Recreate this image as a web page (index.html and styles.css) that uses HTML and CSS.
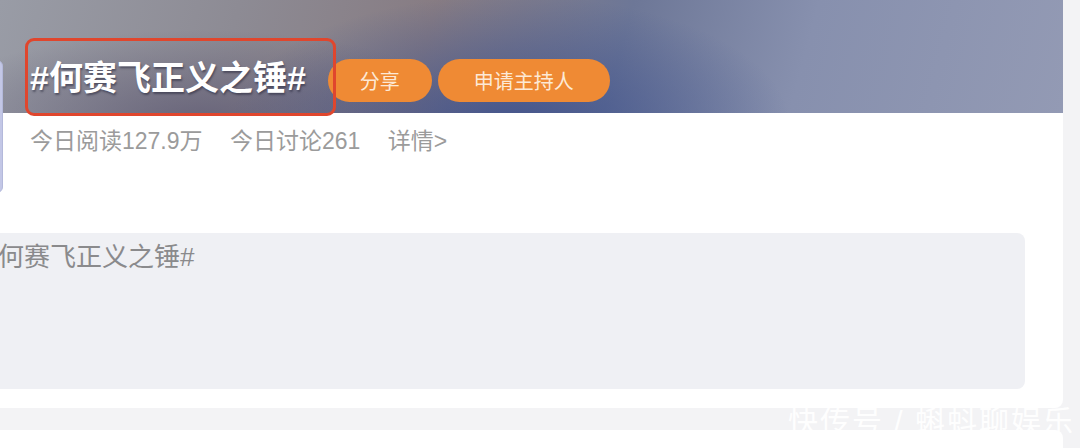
FILE: index.html
```html
<!DOCTYPE html>
<html lang="zh-CN">
<head>
  <meta charset="UTF-8">
  <title>#何赛飞正义之锤#</title>
  <link rel="stylesheet" href="styles.css">
</head>
<body>

<div class="card">
  <div class="head">
    <div class="avatar"></div>
    <div class="info">
      <div class="title-row">
        <h1 class="title">#何赛飞正义之锤#</h1>
        <button class="pill share">分享</button>
        <button class="pill host">申请主持人</button>
      </div>
      <div class="stats">
        <span>今日阅读127.9万</span>
        <span>今日讨论261</span>
        <span>详情&gt;</span>
      </div>
    </div>
  </div>
  <div class="compose">何赛飞正义之锤#</div>
</div>

<div class="card next"></div>

<div class="watermark">快传号 / 蝌蚪聊娱乐</div>

</body>
</html>
```

FILE: styles.css
```css
* {
  box-sizing: border-box;
}

body {
  margin: 0;
  font-family: "Liberation Sans", "Noto Sans CJK SC", sans-serif;
  background-color: #f3f3f5;
  height: 448px;
  overflow: hidden;
  position: relative;
}

.card {
  width: 1063px;
  height: 408px;
  padding-top: 59px;
  border-radius: 0 0 8px 0;
  background:
    radial-gradient(ellipse 280px 130px at 510px 125px, rgba(58, 78, 140, 0.85), rgba(58, 78, 140, 0) 100%) 0 0 / 100% 113px no-repeat,
    radial-gradient(ellipse 280px 90px at 200px 120px, rgba(85, 80, 108, 0.65), rgba(85, 80, 108, 0) 100%) 0 0 / 100% 113px no-repeat,
    linear-gradient(105deg, #999ca6 0%, #8d8b94 22%, #877c83 40%, #6d7797 58%, #8790ae 75%, #939ab4 100%) 0 0 / 100% 113px no-repeat,
    #fff;
}

.card.next {
  height: 40px;
  margin-top: 22px;
  padding: 0;
  background: #fff;
  border-radius: 0 8px 0 0;
}

.head {
  display: flex;
  align-items: flex-start;
  gap: 27px;
}

.avatar {
  width: 133px;
  height: 133px;
  margin-left: -130px;
  margin-top: 1px;
  border-radius: 6px;
  background-color: #c3c7e6;
  border: 1px solid #b4b9db;
}

.title-row {
  display: flex;
  align-items: center;
  height: 42px;
}

.title {
  position: relative;
  top: -2px;
  margin: 0 22px 0 0;
  font-size: 34px;
  line-height: 42px;
  font-weight: bold;
  color: #fff;
  text-shadow: 1px 2px 2px rgba(40, 40, 60, 0.55);
}

/* annotation box drawn over the title */
.title::after {
  content: "";
  position: absolute;
  top: -19px;
  bottom: -17px;
  left: -5px;
  right: -30px;
  border: 3px solid #e0462d;
  border-radius: 9px;
}

.pill {
  height: 43px;
  border: none;
  border-radius: 22px;
  background-color: #ef8a34;
  color: #fde9d6;
  font-family: inherit;
  font-size: 20px;
  padding: 0 32px;
  margin-right: 6px;
}

.pill.host {
  padding: 0 36px;
}

.stats {
  margin-top: 25px;
  font-size: 23px;
  line-height: 30px;
  color: #9b9b9b;
}

.stats span {
  margin-right: 21px;
}

.compose {
  margin: 40px 38px 0 -30px;
  height: 156px;
  padding: 6px 28px;
  border-radius: 8px;
  background-color: #eff0f4;
  color: #8a8a8c;
  font-size: 26px;
  line-height: 36px;
}

.watermark {
  position: absolute;
  left: 788px;
  top: 402px;
  font-size: 30px;
  line-height: 40px;
  letter-spacing: 2px;
  color: rgba(255, 255, 255, 0.95);
}
```
